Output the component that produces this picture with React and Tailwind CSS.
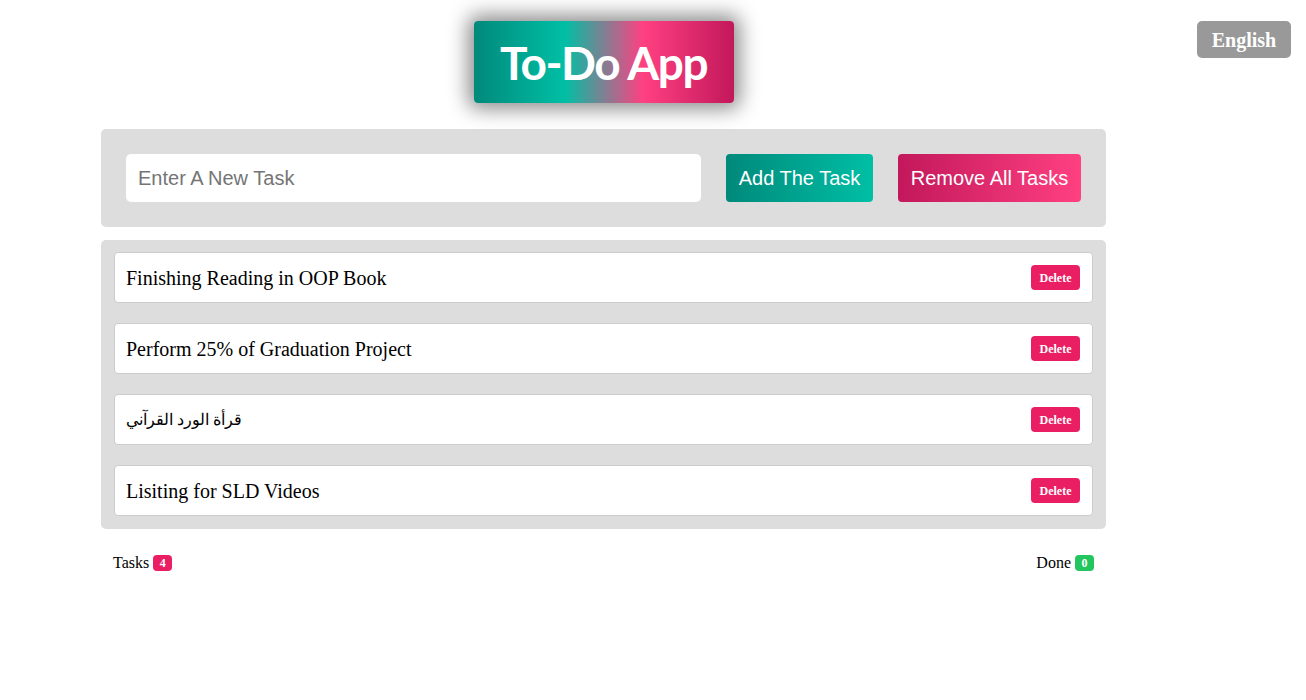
import React from 'react';

const tasks = [
  'Finishing Reading in OOP Book',
  'Perform 25% of Graduation Project',
  'قرأة الورد القرآني',
  'Lisiting for SLD Videos',
];

const serif = "font-['Liberation_Serif','Times_New_Roman',serif]";

export default function App() {
  return (
    <div className="relative min-h-[700px] bg-white">
      {/* language switch */}
      <button className={`absolute right-[15px] top-[21px] h-[37px] w-[94px] rounded-[5px] bg-[#999999] text-[20px] font-bold text-white ${serif}`}>
        English
      </button>

      <div className="ml-[101px] w-[1005px] pt-[21px]">
        {/* title */}
        <div className="flex justify-center">
          <h1 className="flex h-[82px] w-[260px] items-center justify-center rounded-[4px] bg-[linear-gradient(to_right,#00897b_0%,#00bfa5_35%,#ff4081_65%,#c2185b_100%)] font-['Lato',sans-serif] text-[46px] font-bold tracking-[-1.5px] text-white shadow-[0_0_20px_6px_rgba(0,0,0,0.45)]">
            To-Do App
          </h1>
        </div>

        {/* form */}
        <div className="mt-[26px] flex items-center gap-[25px] rounded-[5px] bg-[#dddddd] p-[25px] font-['Liberation_Sans',Arial,sans-serif]">
          <input
            type="text"
            placeholder="Enter A New Task"
            className="h-[48px] w-[575px] rounded-[5px] bg-white px-[12px] text-[20px] text-black outline-none placeholder:text-[#757575]"
          />
          <button className="h-[48px] w-[147px] rounded-[4px] bg-[linear-gradient(to_right,#00897b,#00bfa5)] text-[20px] text-white">
            Add The Task
          </button>
          <button className="h-[48px] w-[183px] rounded-[4px] bg-[linear-gradient(to_right,#c2185b,#ff4081)] text-[20px] text-white">
            Remove All Tasks
          </button>
        </div>

        {/* tasks */}
        <div className="mt-[13px] flex flex-col gap-[20px] rounded-[5px] bg-[#dddddd] px-[13px] pb-[13px] pt-[12px]">
          {tasks.map((t, i) => (
            <div
              key={i}
              className={`flex h-[51px] items-center justify-between rounded-[4px] border border-[#cccccc] bg-white pl-[11px] pr-[12px] ${serif}`}
            >
              <span className={i === 2 ? 'text-[16px] text-black' : 'text-[20px] text-black'}>{t}</span>
              <button className="h-[25px] w-[49px] rounded-[4px] bg-[#e91e63] text-[12px] font-bold text-white">
                Delete
              </button>
            </div>
          ))}
        </div>

        {/* stats */}
        <div className={`mt-[24px] flex items-center justify-between px-[12px] text-[16px] leading-[20px] text-black ${serif}`}>
          <div className="flex items-center gap-[4px]">
            <span>Tasks</span>
            <span className="flex h-[16px] min-w-[19px] items-center justify-center rounded-[4px] bg-[#e91e63] px-[5px] text-[12px] font-bold leading-none text-white">4</span>
          </div>
          <div className="flex items-center gap-[4px]">
            <span>Done</span>
            <span className="flex h-[16px] min-w-[19px] items-center justify-center rounded-[4px] bg-[#22c55e] px-[5px] text-[12px] font-bold leading-none text-white">0</span>
          </div>
        </div>
      </div>
    </div>
  );
}
